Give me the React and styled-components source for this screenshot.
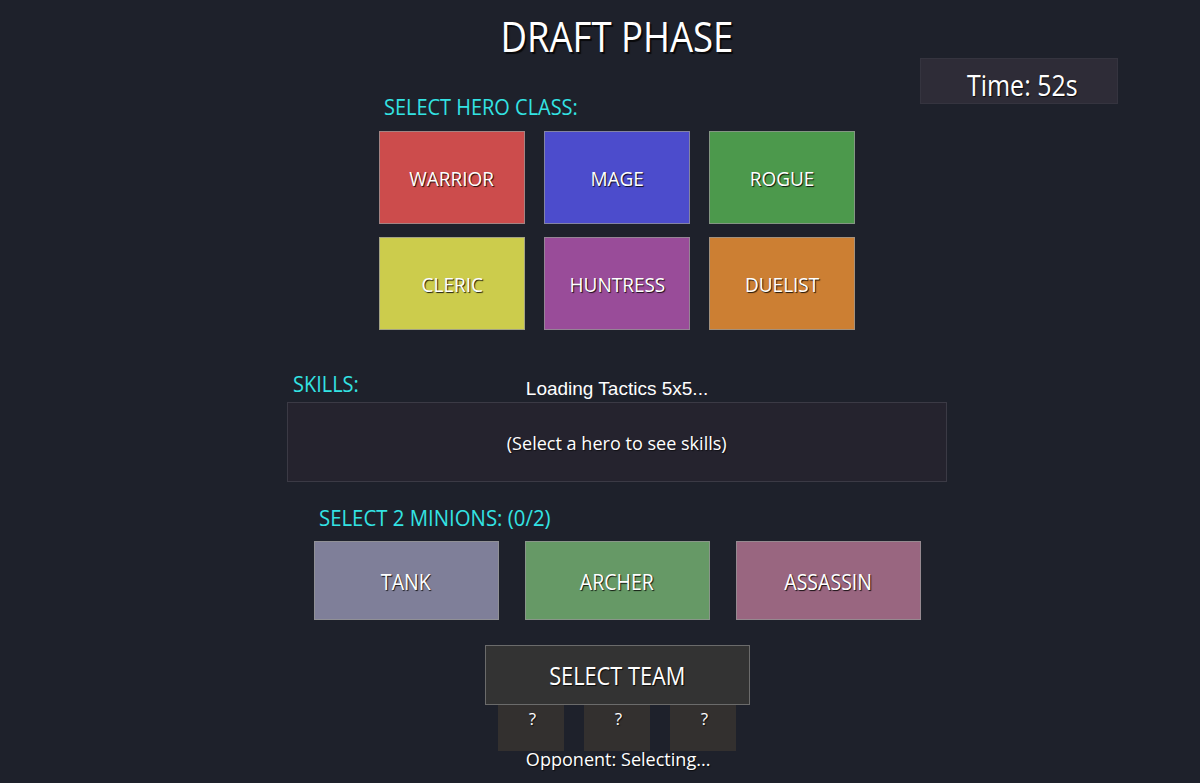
import React from "react"
import styled, { createGlobalStyle } from "styled-components"

const GlobalStyle = createGlobalStyle`
  html, body {
    margin: 0;
    padding: 0;
    background: #1e212b;
  }
  body {
    font-family: "Open Sans", "Noto Sans", sans-serif;
    color: #ffffff;
  }
`

const Page = styled.div`
  position: relative;
  width: 1200px;
  height: 783px;
  overflow: hidden;
  background: #1e212b;
  padding-left: 34px;
  box-sizing: border-box;
  display: flex;
  flex-direction: column;
  align-items: center;
`

// godot-ish text: tall, a bit narrow, with a hard drop shadow
const Squish = styled.span`
  display: inline-block;
  white-space: nowrap;
  transform: scaleX(${p => p.$sx || 0.95});
  transform-origin: ${p => p.$origin || "center"};
`

const Title = styled.h1`
  margin: 11px 0 0;
  height: 50px;
  font-size: 42px;
  line-height: 50px;
  font-weight: 500;
  text-shadow: 2px 2px 1px rgba(0, 0, 0, 0.75);
`

const Timer = styled.div`
  position: absolute;
  left: 920px;
  top: 58px;
  width: 198px;
  height: 46px;
  box-sizing: border-box;
  background: #2e2c37;
  border: 1px solid #35343f;
  display: flex;
  align-items: center;
  justify-content: center;
  padding: 8px 0 0 6px;
  font-size: 29px;
  line-height: 34px;
  text-shadow: 1px 1px 1px rgba(0, 0, 0, 0.8);
`

const Section = styled.section`
  width: ${p => p.$w}px;
  margin-top: ${p => p.$mt || 0}px;
  display: flex;
  flex-direction: column;
`

const Label = styled.div`
  height: 26px;
  line-height: 26px;
  font-size: ${p => p.$size || 21}px;
  color: #33e3e3;
  padding-left: ${p => p.$pl || 5}px;
  margin-bottom: ${p => p.$mb || 0}px;
`

const HeroGrid = styled.div`
  display: grid;
  grid-template-columns: repeat(3, 146px);
  grid-auto-rows: 93px;
  column-gap: 19px;
  row-gap: 13px;
`

const Tile = styled.button`
  box-sizing: border-box;
  margin: 0;
  padding: 2px 0 0;
  background: ${p => p.$bg};
  border: 1px solid rgba(150, 150, 150, 0.75);
  color: #ffffff;
  font-family: "Open Sans", "Noto Sans", sans-serif;
  font-size: ${p => p.$size || 20}px;
  display: flex;
  align-items: center;
  justify-content: center;
  text-shadow: 1px 1px 1px rgba(0, 0, 0, 0.85);
  cursor: pointer;
`

const SkillsHead = styled.div`
  display: grid;
  grid-template-columns: 1fr auto 1fr;
  align-items: baseline;
  height: 26px;
  margin-bottom: 5px;
`

const Loading = styled.div`
  font-family: "Liberation Sans", Arial, sans-serif;
  font-size: 19px;
  color: #ffffff;
  transform: translateY(3px);
`

const SkillsBox = styled.div`
  height: 80px;
  box-sizing: border-box;
  background: #25232e;
  border: 1px solid #3b3a45;
  display: flex;
  align-items: center;
  justify-content: center;
  font-size: 19px;
  text-shadow: 1px 1px 1px rgba(0, 0, 0, 0.6);
  padding-top: 2px;
`

const MinionRow = styled.div`
  display: grid;
  grid-template-columns: repeat(3, 185px);
  height: 79px;
  column-gap: 26px;
`

const TeamButton = styled.button`
  position: relative;
  z-index: 1;
  margin-top: 25px;
  width: 265px;
  height: 60px;
  box-sizing: border-box;
  background: #333333;
  border: 1px solid #6b6b6b;
  color: #ffffff;
  font-family: "Open Sans", "Noto Sans", sans-serif;
  font-size: 25px;
  text-shadow: 1px 1px 1px rgba(0, 0, 0, 0.8);
  display: flex;
  align-items: center;
  justify-content: center;
  padding: 0;
  cursor: pointer;
`

const SlotRow = styled.div`
  display: grid;
  grid-template-columns: repeat(3, 66px);
  column-gap: 20px;
`

const Slot = styled.div`
  height: 46px;
  background: #33302f;
  display: flex;
  justify-content: center;
  padding-top: 1px;
  box-sizing: border-box;
  font-size: 17px;
  line-height: 26px;
  text-shadow: 1px 1px 1px rgba(0, 0, 0, 0.7);
  padding-left: 3px;
`

const Opponent = styled.div`
  margin-top: -3px;
  font-size: 19px;
  line-height: 22px;
  text-shadow: 1px 1px 1px rgba(0, 0, 0, 0.7);
  padding-left: 2px;
`

const heroes = [
  { name: "WARRIOR", bg: "#cc4c4c" },
  { name: "MAGE", bg: "#4c4ccc" },
  { name: "ROGUE", bg: "#4c994c" },
  { name: "CLERIC", bg: "#cccc4c" },
  { name: "HUNTRESS", bg: "#994c99" },
  { name: "DUELIST", bg: "#cc7f33" },
]

const minions = [
  { name: "TANK", bg: "#7f7f99" },
  { name: "ARCHER", bg: "#669966" },
  { name: "ASSASSIN", bg: "#996680" },
]

export default function App() {
  return (
    <Page>
      <GlobalStyle />
      <Title>
        <Squish $sx={0.87}>DRAFT PHASE</Squish>
      </Title>

      <Timer>
        <Squish $sx={0.86}>Time: 52s</Squish>
      </Timer>

      <Section $w={476} $mt={33}>
        <Label $mb={11}>
          <Squish $origin="left">SELECT HERO CLASS:</Squish>
        </Label>
        <HeroGrid>
          {heroes.map(h => (
            <Tile key={h.name} $bg={h.bg}>
              <Squish>{h.name}</Squish>
            </Tile>
          ))}
        </HeroGrid>
      </Section>

      <Section $w={660} $mt={41}>
        <SkillsHead>
          <Label $pl={6}>
            <Squish $origin="left">SKILLS:</Squish>
          </Label>
          <Loading>Loading Tactics 5x5...</Loading>
          <span />
        </SkillsHead>
        <SkillsBox>
          <Squish>(Select a hero to see skills)</Squish>
        </SkillsBox>
      </Section>

      <Section $w={607} $mt={23}>
        <Label $mb={10}>
          <Squish $sx={0.97} $origin="left">SELECT 2 MINIONS: (0/2)</Squish>
        </Label>
        <MinionRow>
          {minions.map(m => (
            <Tile key={m.name} $bg={m.bg} $size={21}>
              <Squish $sx={0.93}>{m.name}</Squish>
            </Tile>
          ))}
        </MinionRow>
      </Section>

      <TeamButton>
        <Squish $sx={0.87}>SELECT TEAM</Squish>
      </TeamButton>
      <SlotRow>
        <Slot>?</Slot>
        <Slot>?</Slot>
        <Slot>?</Slot>
      </SlotRow>
      <Opponent>
        <Squish>Opponent: Selecting...</Squish>
      </Opponent>
    </Page>
  )
}
